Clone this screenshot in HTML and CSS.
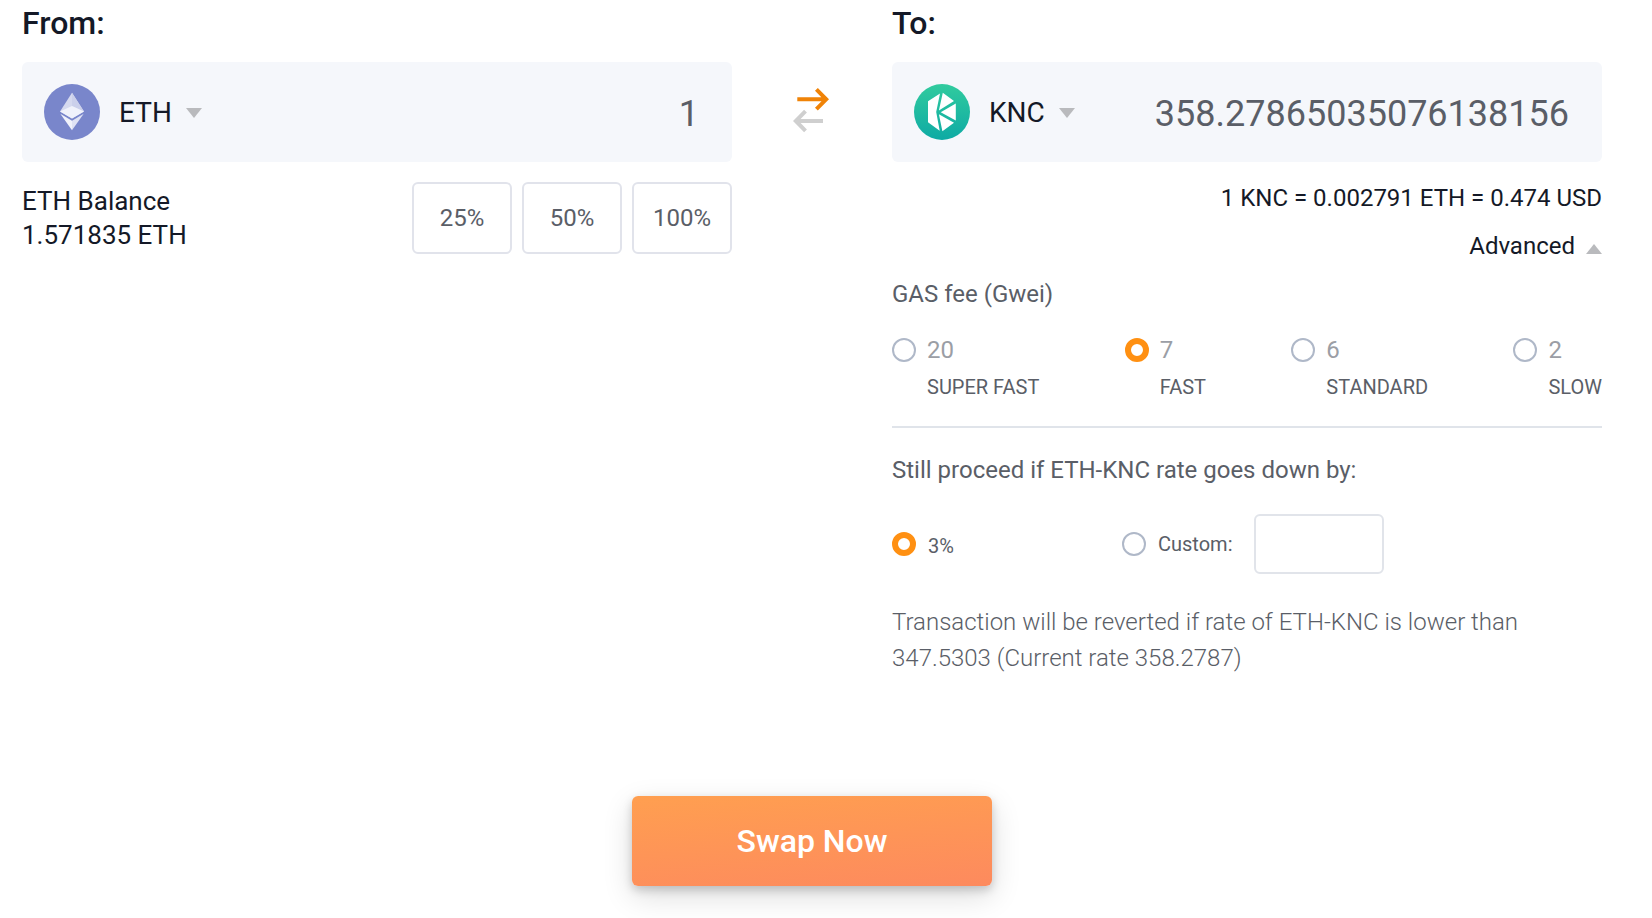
FILE: index.html
```html
<!DOCTYPE html>
<html lang="en">
<head>
<meta charset="utf-8">
<meta name="viewport" content="width=device-width, initial-scale=1">
<title>Swap ETH to KNC</title>
<link rel="stylesheet" href="styles.css">
</head>
<body>
<main>
<form class="swap">
  <div class="exchange">
    <section class="side">
      <h2 class="heading"><label for="from-amount">From:</label></h2>
      <div class="token-box">
        <button type="button" class="token">
          <svg class="coin" viewBox="0 0 56 56" aria-hidden="true">
            <circle cx="28" cy="28" r="28" fill="#7986cb"/>
            <path d="M28 8.7 40 27.5 28 34.5 16 27.5z" fill="#d5d9ef"/>
            <path d="M28 8.7 40 27.5 28 22z" fill="#cbd0eb"/>
            <path d="M28 22 40 27.5 28 34.5 16 27.5z" fill="#f0f2fb"/>
            <path d="M16.3 29.8 28 36.7 28 46.2z" fill="#f0f2fb"/>
            <path d="M39.7 29.8 28 36.7 28 46.2z" fill="#dfe2f4"/>
          </svg>
          <span>ETH</span>
          <svg class="caret" viewBox="0 0 16 10" aria-hidden="true"><path d="M0 0h16L8 10z"/></svg>
        </button>
        <input class="amount" id="from-amount" type="text" inputmode="decimal" value="1">
      </div>
      <div class="balance-row">
        <p class="balance">ETH Balance<br>1.571835 ETH</p>
        <div class="shares">
          <button type="button" class="share">25%</button>
          <button type="button" class="share">50%</button>
          <button type="button" class="share">100%</button>
        </div>
      </div>
    </section>

    <button type="button" class="flip" aria-label="Switch tokens">
      <svg viewBox="0 0 36 46" fill="none" stroke-width="4" aria-hidden="true">
        <path d="M30 34H3M12.5 24.2 2.8 34l9.7 9.8" stroke="#cfcfcf"/>
        <path d="M4.3 12.3H33M23.4 2.4l9.8 9.9-9.8 9.9" stroke="#f08307"/>
      </svg>
    </button>

    <section class="side">
      <h2 class="heading"><label for="to-amount">To:</label></h2>
      <div class="token-box">
        <button type="button" class="token">
          <svg class="coin" viewBox="0 0 56 56" aria-hidden="true">
            <defs><linearGradient id="knc" x1="0" y1="0" x2="0" y2="1"><stop offset="0" stop-color="#31cb9e"/><stop offset="1" stop-color="#0eaaa4"/></linearGradient></defs>
            <circle cx="28" cy="28" r="28" fill="url(#knc)"/>
            <path fill="#fff" d="M14 17.2 26 9.5 22.2 28 25.7 46.7 14 38.3zM28.8 8.8 40 17 24.9 26.6zM41.8 19.5v17L26.7 28.3zM24.9 30.2 40 38.8 28.4 47.2z"/>
          </svg>
          <span>KNC</span>
          <svg class="caret" viewBox="0 0 16 10" aria-hidden="true"><path d="M0 0h16L8 10z"/></svg>
        </button>
        <input class="amount" id="to-amount" type="text" inputmode="decimal" value="358.27865035076138156">
      </div>
      <p class="rate">1 KNC = 0.002791 ETH = 0.474 USD</p>
      <button type="button" class="advanced" aria-expanded="true">Advanced
        <svg class="caret" viewBox="0 0 16 10" aria-hidden="true"><path d="M0 10h16L8 0z"/></svg>
      </button>

      <fieldset class="group">
        <legend class="legend">GAS fee (Gwei)</legend>
        <div class="gas-options">
          <label class="option"><input class="radio" type="radio" name="gas"><span class="gwei">20</span><span class="speed">SUPER FAST</span></label>
          <label class="option"><input class="radio" type="radio" name="gas" checked><span class="gwei">7</span><span class="speed">FAST</span></label>
          <label class="option"><input class="radio" type="radio" name="gas"><span class="gwei">6</span><span class="speed">STANDARD</span></label>
          <label class="option"><input class="radio" type="radio" name="gas"><span class="gwei">2</span><span class="speed">SLOW</span></label>
        </div>
      </fieldset>

      <fieldset class="group slippage">
        <legend class="legend">Still proceed if ETH-KNC rate goes down by:</legend>
        <div class="slippage-options">
          <label class="choice"><input class="radio" type="radio" name="slippage" checked><span class="preset">3%</span></label>
          <div class="custom">
            <label class="choice"><input class="radio" type="radio" name="slippage">Custom:</label>
            <input class="custom-value" type="text" inputmode="decimal" aria-label="Custom percentage">
          </div>
        </div>
      </fieldset>
      <p class="note">Transaction will be reverted if rate of ETH-KNC is lower than 347.5303 (Current rate 358.2787)</p>
    </section>
  </div>
  <button type="submit" class="submit">Swap Now</button>
</form>
</main>
</body>
</html>
```
FILE: styles.css
```css
* {
  box-sizing: border-box;
}

body {
  margin: 0;
  background: #fff;
  color: #141927;
  font-family: Roboto, "Liberation Sans", sans-serif;
  font-size: 24px;
}

button,
input {
  font: inherit;
  color: inherit;
}

button {
  padding: 0;
  border: 0;
  background: none;
  cursor: pointer;
}

p,
h2 {
  margin: 0;
}

.swap {
  display: flex;
  flex-direction: column;
  align-items: center;
  padding: 2px 50px 32px 22px;
}

.exchange {
  display: grid;
  grid-template-columns: minmax(0, 1fr) 160px minmax(0, 1fr);
  align-items: start;
  width: 100%;
}

.side {
  display: flex;
  flex-direction: column;
}

.heading {
  margin-bottom: 18px;
  font-size: 32px;
  font-weight: 500;
  line-height: 42px;
}

.token-box {
  display: flex;
  align-items: center;
  padding: 22px 33px 22px 22px;
  border-radius: 6px;
  background: #f5f7fb;
}

.token {
  display: flex;
  flex: none;
  align-items: center;
  font-size: 28px;
}

.coin {
  width: 56px;
  height: 56px;
  margin-right: 19px;
}

.caret {
  width: 16px;
  height: 10px;
  fill: #b9babd;
}

.token .caret {
  margin: 2px 0 0 14px;
}

.amount {
  flex: 1;
  width: 100%;
  min-width: 0;
  padding: 4px 0 0;
  border: 0;
  outline: 0;
  background: none;
  color: #5a5e67;
  font-size: 36px;
  text-align: right;
}

.balance-row {
  display: flex;
  align-items: flex-start;
  justify-content: space-between;
  margin-top: 20px;
}

.balance {
  padding-top: 2px;
  font-size: 26px;
  line-height: 34px;
}

.shares {
  display: flex;
  gap: 10px;
}

.share {
  width: 100px;
  height: 72px;
  border: 2px solid #e1e3eb;
  border-radius: 6px;
  color: #5a5e67;
}

.flip {
  justify-self: center;
  width: 38px;
  height: 46px;
  padding-right: 2px;
  margin-top: 85px;
}

.flip svg {
  display: block;
}

.rate {
  margin-top: 18px;
  line-height: 36px;
  text-align: right;
}

.advanced {
  display: flex;
  align-items: baseline;
  align-self: flex-end;
  gap: 11px;
  margin-top: 12px;
  line-height: 36px;
}

.group {
  min-width: 0;
  margin: 12px 0 0;
  padding: 0;
  border: 0;
  color: #5a5e67;
}

.legend {
  padding: 0;
  line-height: 36px;
}

.gas-options {
  display: flex;
  justify-content: space-between;
  padding: 20px 0;
  border-bottom: 2px solid #e0e4ea;
}

.option {
  display: grid;
  grid-template-columns: 24px auto;
  column-gap: 11px;
  align-items: center;
}

.radio {
  flex: none;
  width: 24px;
  height: 24px;
  margin: 0;
  border: 2px solid #afb8c8;
  border-radius: 50%;
  appearance: none;
  background: #fff;
}

.radio:checked {
  border: 6px solid #ff9012;
}

.gwei {
  color: #9b9ea5;
  line-height: 36px;
}

.speed {
  grid-column: 2;
  font-size: 20px;
  line-height: 38px;
}

.slippage {
  margin-top: 24px;
}

.slippage-options {
  display: grid;
  grid-template-columns: 230px auto;
  align-items: center;
  justify-content: start;
  padding-top: 26px;
  font-size: 20px;
}

.choice,
.custom {
  display: flex;
  align-items: center;
}

.choice {
  gap: 12px;
}

.preset {
  padding-top: 4px;
}

.custom {
  gap: 21px;
}

.custom-value {
  width: 130px;
  height: 60px;
  padding: 0 12px;
  border: 2px solid #e1e4ea;
  border-radius: 6px;
}

.note {
  margin-top: 30px;
  color: #5a5e67;
  font-weight: 300;
  line-height: 36px;
}

.submit {
  width: 360px;
  max-width: 100%;
  height: 90px;
  margin-top: 120px;
  border-radius: 6px;
  background: linear-gradient(175deg, #ff9f50, #fd8a5e);
  box-shadow: 0 4px 10px rgba(0, 0, 0, 0.18), 0 10px 30px rgba(0, 0, 0, 0.14);
  color: #fff;
  font-size: 32px;
  font-weight: 500;
}

@media (max-width: 1100px) {
  .exchange {
    grid-template-columns: minmax(0, 1fr);
    row-gap: 32px;
  }

  .flip {
    margin-top: 0;
  }

  .gas-options {
    flex-wrap: wrap;
    gap: 12px;
  }

  .swap {
    padding-right: 22px;
  }
}
```
